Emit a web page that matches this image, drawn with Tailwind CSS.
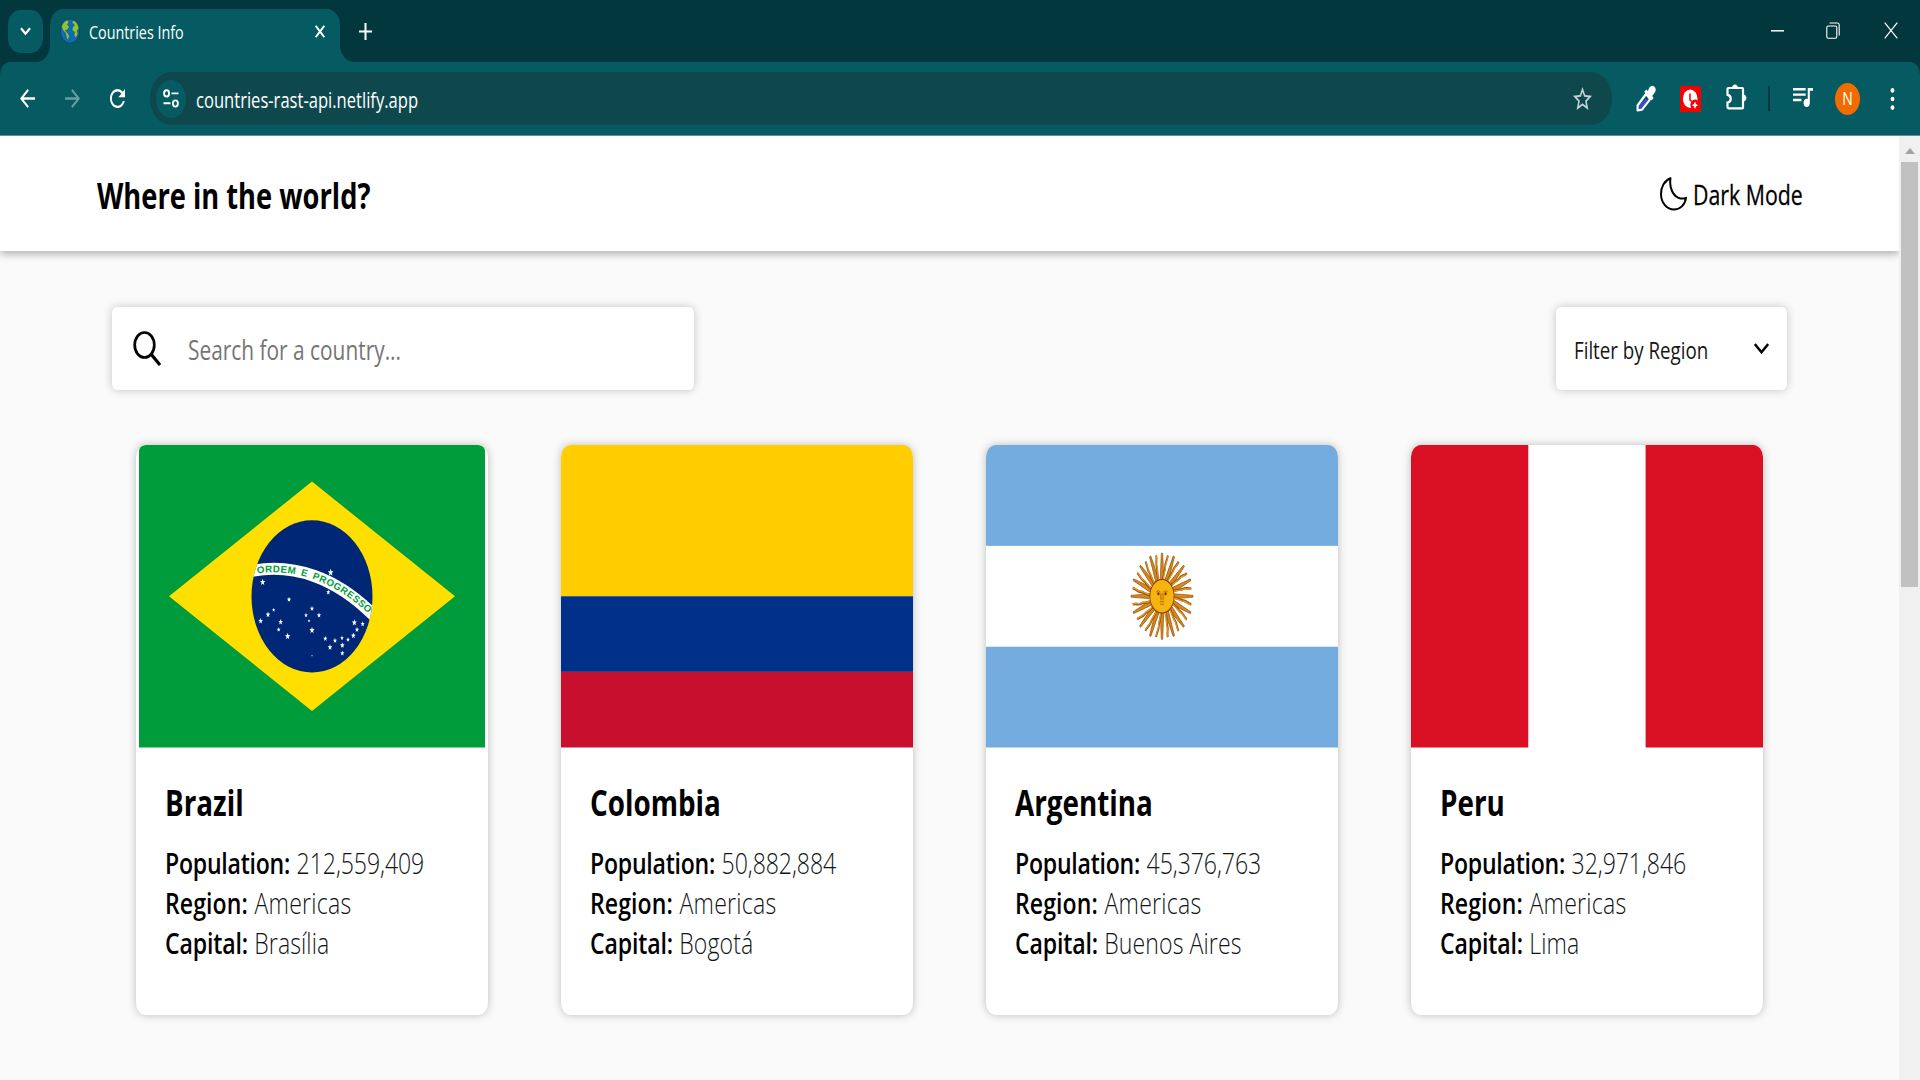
<!DOCTYPE html>
<html lang="en">
<head>
<meta charset="utf-8">
<title>Countries Info</title>
<script src="https://cdn.jsdelivr.net/npm/@tailwindcss/browser@4"></script>
</head>
<body class="w-[1920px] h-[1080px] overflow-hidden flex flex-col bg-[#02383d] text-black font-['Open_Sans',sans-serif]">

<!-- Tab strip -->
<div class="h-[62px] shrink-0 flex items-start pl-2 text-white">
  <div class="mt-[10px] w-[35px] h-[43px] rounded-[12px/15px] bg-[#055b61] flex items-center justify-center">
    <svg class="w-[11px] h-[9px]" viewBox="0 0 11 9" fill="none" stroke="#fff" stroke-width="2.2"><path d="M1 1.3 5.5 6.8 10 1.3"/></svg>
  </div>
  <div class="relative ml-[7px] mt-[9px] w-[290px] h-[53px] rounded-t-[13px_16px] bg-[#055b61] flex items-center pl-[10px] pr-[15px]">
    <svg class="absolute -left-[14px] bottom-0 w-[14px] h-[17px]" viewBox="0 0 14 17" fill="#055b61"><path d="M14 0V17H0A14 17 0 0 0 14 0Z"/></svg>
    <svg class="absolute -right-[14px] bottom-0 w-[14px] h-[17px]" viewBox="0 0 14 17" fill="#055b61"><path d="M0 0V17H14A14 17 0 0 1 0 0Z"/></svg>
    <svg class="w-5 h-[26px] -mt-[10px]" viewBox="0 0 20 26"><ellipse cx="10" cy="13" rx="9.6" ry="12.3" fill="#0b6bbd" stroke="#0c3f55" stroke-width=".8"/><path d="M1.500 9C2.200 5 5 2.400 8 2L9 4 7.500 6.500 9.500 9 7.500 12 5.500 12.500 8.500 16 9.500 18 8 22.500 6.500 20 5.500 15 3 12.500ZM11.500 4 14 2.500C17 4 18.800 7.500 19 11L17 12.500 18 16 16 20 14 17.500 14.500 14 12 12.500 12.500 9 14.500 7.500Z" fill="#8bc23f" stroke="#23493a" stroke-width=".5"/></svg>
    <span class="ml-[9px] -mt-[8px] text-[18.5px] leading-6 whitespace-nowrap origin-left [transform:scaleX(0.775)]">Countries Info</span>
    <svg class="ml-auto w-[10px] h-[13px] -mt-[9px]" viewBox="0 0 10 13" fill="none" stroke="#fff" stroke-width="2"><path d="M.7 .8 9.300 12.200M9.300 .8 .7 12.200"/></svg>
  </div>
  <svg class="ml-[19px] mt-[23px] w-[13px] h-[17px]" viewBox="0 0 13 17" fill="none" stroke="#fff" stroke-width="2"><path d="M6.500 0V17M0 8.500H13"/></svg>
  <svg class="ml-auto mt-[30px] w-[13px] h-[2px]" viewBox="0 0 13 2"><path d="M0 0H13V1.600H0Z" fill="#fff" opacity=".9"/></svg>
  <svg class="ml-[42px] mt-[22px] w-[14px] h-[17px]" viewBox="0 0 14 17" fill="none" stroke="#fff" stroke-width="1.100"><rect x=".8" y="4" width="10" height="12.300" rx="1.500"/><path d="M3.500 1H11.500Q13.200 1 13.200 3V13.500"/></svg>
  <svg class="ml-[44px] mr-[22px] mt-[22px] w-[14px] h-[17px]" viewBox="0 0 14 17" fill="none" stroke="#fff" stroke-width="1.200"><path d="M.7 .7 13.300 16.300M13.300 .7 .7 16.300"/></svg>
</div>

<!-- Toolbar -->
<div class="h-[74px] shrink-0 bg-[#055b61] rounded-t-[10px_13px] border-b border-[#5e9396] flex items-center pl-5 text-white">
  <svg class="w-[15px] h-[19px]" preserveAspectRatio="none" viewBox="4 4 16 16" fill="#fff"><path d="M20 11H7.830l5.590-5.590L12 4l-8 8 8 8 1.410-1.410L7.830 13H20v-2z"/></svg>
  <svg class="ml-[30px] w-[15px] h-[19px] opacity-40" preserveAspectRatio="none" viewBox="4 4 16 16" fill="#fff"><path d="m12 4-1.410 1.410L16.170 11H4v2h12.170l-5.580 5.590L12 20l8-8z"/></svg>
  <svg class="ml-[30px] w-[15px] h-[19px]" preserveAspectRatio="none" viewBox="4 4 16 16" fill="#fff"><path d="M17.650 6.350C16.200 4.900 14.210 4 12 4c-4.420 0-7.990 3.580-7.990 8s3.570 8 7.990 8c3.730 0 6.840-2.550 7.730-6h-2.080c-.82 2.330-3.040 4-5.650 4-3.310 0-6-2.690-6-6s2.690-6 6-6c1.660 0 3.140.69 4.220 1.780L13 11h7V4l-2.350 2.350z"/></svg>
  <div class="ml-[25px] w-[1462px] h-[53px] rounded-[21px/26px] bg-[#0e484d] flex items-center pl-[6px] pr-5">
    <div class="w-[30px] h-[38px] rounded-[50%] bg-[#055b61] flex items-center justify-center">
      <svg class="w-4 h-[19px]" viewBox="0 0 16 19" fill="none" stroke="#fff" stroke-width="1.900"><ellipse cx="3.600" cy="4.400" rx="2.500" ry="3.100"/><path d="M8.500 4.400H15.500M.5 14.300H7.500"/><ellipse cx="12.400" cy="14.500" rx="2.500" ry="3.100"/></svg>
    </div>
    <span class="ml-[10px] mt-[2px] text-[21px] leading-7 whitespace-nowrap origin-left [transform:scaleX(0.789)]">countries-rast-api.netlify.app</span>
    <svg class="ml-auto w-[19px] h-[23px]" preserveAspectRatio="none" viewBox="2 2 20 19" fill="#c6d3d4"><path d="M22 9.240l-7.190-.62L12 2 9.190 8.630 2 9.240l5.460 4.730L5.820 21 12 17.270 18.180 21l-1.630-7.030L22 9.240zM12 15.400l-3.760 2.270 1-4.280-3.320-2.880 4.380-.38L12 6.100l1.710 4.040 4.380.38-3.320 2.880 1 4.280L12 15.400z"/></svg>
  </div>
  <!-- colour picker -->
  <svg class="ml-6 w-5 h-[27px]" viewBox="0 0 20 27"><path d="M1.600 20.500 10 9 14.200 14 6 24.600 1.600 25.300Z" fill="#0b4f58" stroke="#fff" stroke-width="2.200" stroke-linejoin="round"/><path d="M3.300 21 9.500 13.500 11.800 15.500 5.400 23.200 3.300 23.500Z" fill="#3b50cc"/><path d="M8.300 6.800 10.300 4.600 11.800 6 13.500 2.200Q16-.6 18.500 1.800 20.800 4.500 18.800 7.600L16.200 11 17.600 13 15.600 15.600Z" fill="#fff"/></svg>
  <!-- clock extension -->
  <svg class="ml-6 w-[21px] h-[26px]" viewBox="0 0 21 26"><rect width="21" height="26" rx="1.500" fill="#f80000"/><ellipse cx="10.200" cy="12.700" rx="7.300" ry="9.200" fill="#fff"/><path d="M10 7.500V14L13 16" fill="none" stroke="#f80000" stroke-width="1.500"/><ellipse cx="15" cy="19" rx="4.600" ry="5.400" fill="#f80000"/><path d="M15 15.500 16 18 18 19.200 16 20.400 15 23 14 20.400 12 19.200 14 18Z" fill="#fff"/></svg>
  <!-- extensions -->
  <svg class="ml-[25px] w-[21px] h-[26px] -mt-[3px]" viewBox="0 0 21 26"><path d="M2.500 4H16.200Q17 4 17 5V23.500Q17 24.300 16.200 24.300H2.500Q1.500 24.300 1.500 23.300V18.500C5.800 18 5.800 11.500 1.500 10.800V5Q1.500 4 2.500 4Z" fill="none" stroke="#fff" stroke-width="2.200"/><path d="M6 4C6-.8 12-.8 12 4ZM17 10.500C21.500 10.500 21.500 17.500 17 17.500Z" fill="#fff"/></svg>
  <div class="ml-[21px] w-[2px] h-[25px] bg-[#02383d]"></div>
  <svg class="ml-[23px] w-5 h-[19px] -mt-[2px]" preserveAspectRatio="none" viewBox="3 6 19 14" fill="#fff"><path d="M15 6H3v1.800h12V6zm0 4H3v1.800h12v-1.800zM3 15.800h8v-1.800H3v1.800zM17 6v8.180c-.31-.11-.65-.18-1-.18-1.660 0-3 1.340-3 3s1.340 3 3 3 3-1.340 3-3V8h3V6h-5z"/></svg>
  <div class="ml-[22px] w-[25px] h-8 rounded-[50%] bg-[#f06c00] flex items-center justify-center text-[17.500px] leading-none"><span class="[transform:scaleX(0.8)]">N</span></div>
  <svg class="ml-[30px] w-[5px] h-[22px]" viewBox="0 0 5 22" fill="#fff"><ellipse cx="2.500" cy="2.400" rx="1.900" ry="2.300"/><ellipse cx="2.500" cy="11" rx="1.900" ry="2.300"/><ellipse cx="2.500" cy="19.600" rx="1.900" ry="2.300"/></svg>
</div>

<!-- Viewport -->
<div class="flex-1 min-h-0 flex">
  <main class="w-[1899px] h-full overflow-hidden bg-[#fafafa] flex flex-col">
    <header class="h-[115px] shrink-0 bg-white shadow-[0_3px_8px_rgba(0,0,0,0.3)] flex items-center justify-between pl-[97px] pr-[95px]">
      <h1 class="mt-[3px] text-[36.500px] leading-[48px] font-bold whitespace-nowrap origin-left [transform:scaleX(0.747)]">Where in the world?</h1>
      <div class="flex items-center">
        <svg class="w-[27px] h-[34px]" viewBox="0 0 27 34" fill="none" stroke="#000" stroke-width="2" stroke-linejoin="round"><path d="M10.500 1.200C4.500 3.500 1 10 1 17 1 26 7 32.500 14 32.500 20 32.500 25 28 26 20.800Q24 21.800 20.500 21.500C13 20 9 10.500 10.500 1.200Z"/></svg>
        <span class="ml-[6px] mt-[2px] w-[111px] text-[27.500px] leading-9 whitespace-nowrap origin-left [transform:scaleX(0.775)] [-webkit-text-stroke:0.3px_#000]">Dark Mode</span>
      </div>
    </header>

    <div class="mt-[56px] pl-[112px] pr-[112px] flex justify-between">
      <div class="w-[582px] h-[83px] rounded-[5px/6px] bg-white shadow-[0_0_10px_rgba(0,0,0,0.22)] flex items-center pl-[21px]">
        <svg class="w-7 h-[35px]" viewBox="0 0 28 35" fill="none" stroke="#000"><ellipse cx="11.500" cy="14" rx="9.800" ry="12.500" stroke-width="2.700"/><path d="M18 23 27 34" stroke-width="3.200"/></svg>
        <span class="ml-[27px] mt-[3px] text-[27px] leading-9 whitespace-nowrap text-[#757575] origin-left [transform:scaleX(0.773)]">Search for a country...</span>
      </div>
      <div class="w-[231px] h-[83px] rounded-[5px/6px] bg-white shadow-[0_0_10px_rgba(0,0,0,0.22)] flex items-center pl-[18px] pr-[18px]">
        <span class="mt-[3px] w-[180px] text-[23.500px] leading-8 whitespace-nowrap text-[#151515] origin-left [transform:scaleX(0.797)]">Filter by Region</span>
        <svg class="w-[15px] h-[11px] shrink-0" viewBox="0 0 15 11" fill="none" stroke="#000" stroke-width="2.500"><path d="M.8 1 7.500 9.200 14.200 1"/></svg>
      </div>
    </div>

    <div id="cards" class="mt-[55px] pl-[136px] flex gap-[73px]"></div>
  </main>

  <!-- Scrollbar -->
  <div class="flex-1 bg-[#f0f0f0] flex flex-col items-center pt-3">
    <svg class="w-[10px] h-[6px]" viewBox="0 0 10 6"><path d="M5 0 10 6H0Z" fill="#a3a3a3"/></svg>
    <div class="mt-2 w-[17px] h-[425px] bg-[#c1c1c1]"></div>
  </div>
</div>

<template id="flag-Brazil">
  <svg class="block w-[346px] h-[302.500px] mx-auto rounded-t-[6px]" viewBox="0 0 346 302" preserveAspectRatio="none">
    <rect width="346" height="302" fill="#009c3b"/>
    <path d="M30 151 173 36.500 316 151 173 265.500Z" fill="#ffdf00"/>
    <clipPath id="globe"><ellipse cx="216" cy="258.500" rx="181.500" ry="228"/></clipPath>
    <g transform="translate(101 65) scale(.33333)">
      <g clip-path="url(#globe)">
        <rect width="440" height="520" fill="#002776"/>
        <path d="M30 183C160 157 290 202 405 319" fill="none" stroke="#fff" stroke-width="36"/>
      </g>
      <path id="motto" d="M30 193.500C160 167.500 290 212.500 405 329.500" fill="none"/>
      <text font-family="Liberation Sans" font-weight="bold" font-size="29" word-spacing="5" fill="#009c3b"><textPath href="#motto" startOffset="22" textLength="366" lengthAdjust="spacing">ORDEM E PROGRESSO</textPath></text>
      <g id="stars" fill="#fff"></g>
    </g>
  </svg>
</template>
<template id="flag-Colombia">
  <svg class="block w-full h-[302.500px]" viewBox="0 0 352 302" preserveAspectRatio="none"><rect width="352" height="151" fill="#ffcd00"/><rect y="151" width="352" height="75.500" fill="#003087"/><rect y="226.500" width="352" height="75.500" fill="#c8102e"/></svg>
</template>
<template id="flag-Argentina">
  <svg class="block w-full h-[302.500px]" viewBox="0 0 352 302" preserveAspectRatio="none">
    <rect width="352" height="302" fill="#74acdf"/><rect y="100.700" width="352" height="100.700" fill="#fff"/>
    <g transform="translate(176 151) scale(.72 1)">
      <g id="rays"></g>
      <circle r="16.800" fill="#f6b40e" stroke="#85340a" stroke-width="1"/>
      <g fill="none" stroke="#85340a" stroke-width=".7"><path d="M-8-4Q-5-7-2-4M2-4Q5-7 8-4M-1.500-3V4M1.500-3V4M-3 5.500H3M-2.500 8H2.500"/><circle cx="-5" cy="-2.500" r="1.300" fill="#85340a"/><circle cx="5" cy="-2.500" r="1.300" fill="#85340a"/></g>
    </g>
  </svg>
</template>
<template id="flag-Peru">
  <svg class="block w-full h-[302.500px]" viewBox="0 0 352 302" preserveAspectRatio="none"><path d="M0 0H117.300V302H0ZM234.600 0H352V302H234.600Z" fill="#d91023"/></svg>
</template>

<script>
const countries = [
  ['Brazil', '212,559,409', 'Americas', 'Brasília'],
  ['Colombia', '50,882,884', 'Americas', 'Bogotá'],
  ['Argentina', '45,376,763', 'Americas', 'Buenos Aires'],
  ['Peru', '32,971,846', 'Americas', 'Lima'],
];
const row = (label, value, labelClass, valueClass) => `
  <p class="flex gap-[8px] h-10 items-baseline text-[28.500px] leading-10 whitespace-nowrap origin-left [transform:scaleX(0.81)]">
    <span class="font-semibold ${labelClass}">${label}:</span>
    <span class="font-light text-[#111517] ${valueClass}">${value}</span>
  </p>`;
document.getElementById('cards').innerHTML = countries.map(([name, pop, region, capital]) => `
  <article class="w-[352px] h-[570px] shrink-0 rounded-[10px/12px] overflow-hidden bg-white shadow-[0_0_8px_rgba(0,0,0,0.25)]">
    ${document.getElementById('flag-' + name).innerHTML}
    <div class="pl-[29px] pt-[30.500px]">
      <h2 class="text-[36.500px] leading-[48px] font-bold whitespace-nowrap origin-left [transform:scaleX(0.762)]">${name}</h2>
      <div class="mt-[17px]">
        ${row('Population', pop, 'tracking-[-0.3px]', 'tracking-[-0.1px]')}
        ${row('Region', region, 'tracking-[0.1px]', 'tracking-[0.3px]')}
        ${row('Capital', capital, 'tracking-[-0.2px]', 'tracking-[0.1px]')}
      </div>
    </div>
  </article>`).join('');

// Stars on the Brazilian globe: x, y, radius
document.getElementById('stars').innerHTML = [
  [272,187,11],[68,216,10],[265,246,8],[147,268,8],[216,295,8],[198,315,7],[237,315,8],[207,332,5],[101,299,6],[84,313,9],[62,332,9],[122,335,9],[116,358,7],[143,378,10],[216,360,10],[256,385,8],[270,411,9],[285,391,8],[306,383,7],[307,405,9],[307,429,8],[324,388,7],[340,376,9],[351,358,8],[343,337,10],[368,341,8],[216,436,3],
].map(([x, y, r]) => {
  const pts = [];
  for (let i = 0; i < 10; i++) {
    const a = -Math.PI / 2 + i * Math.PI / 5, k = i % 2 ? r * .42 : r;
    pts.push((x + k * .82 * Math.cos(a)).toFixed(1) + ',' + (y + k * 1.05 * Math.sin(a)).toFixed(1));
  }
  return `<polygon points="${pts.join(' ')}"/>`;
}).join('');

// Sun of May: 16 straight and 16 wavy rays
let rays = '';
for (let i = 0; i < 32; i++) {
  const shape = i % 2
    ? '<path d="M-1.600-15C-3.500-22-.5-26-1.500-30S.5-37 0-41.500" fill="none" stroke="#9c4f10" stroke-width="2.600"/><path d="M-1.200-15C-3-22 0-26-1-30S1-37 .3-41" fill="none" stroke="#e0991c" stroke-width="1.500"/>'
    : '<path d="M-2.600-15-.9-43H.9L2.600-15Z" fill="#d18a1c" stroke="#9c4f10" stroke-width=".8"/>';
  rays += `<g transform="rotate(${i * 11.25})">${shape}</g>`;
}
document.getElementById('rays').innerHTML = rays;
</script>
</body>
</html>
